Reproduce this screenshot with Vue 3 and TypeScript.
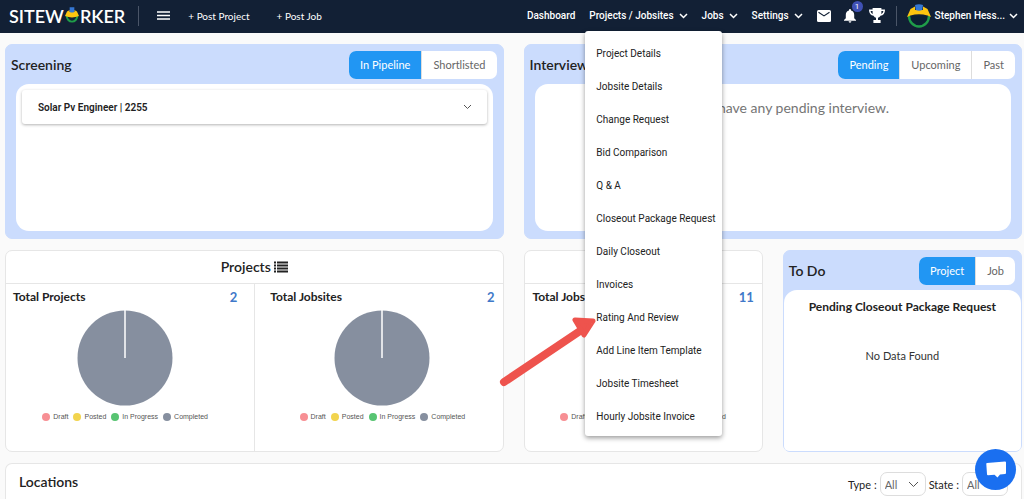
<script setup lang="ts">
import { ref } from 'vue'

interface ChartPanel {
  title: string
  total: number
}

interface Status {
  label: string
  tone: string
}

const menuItems: string[] = [
  'Project Details',
  'Jobsite Details',
  'Change Request',
  'Bid Comparison',
  'Q & A',
  'Closeout Package Request',
  'Daily Closeout',
  'Invoices',
  'Rating And Review',
  'Add Line Item Template',
  'Jobsite Timesheet',
  'Hourly Jobsite Invoice',
]

const highlighted = 'Rating And Review'

const projectCharts: ChartPanel[] = [
  { title: 'Total Projects', total: 2 },
  { title: 'Total Jobsites', total: 2 },
]
const jobCharts: ChartPanel[] = [{ title: 'Total Jobs', total: 11 }]

const statuses: Status[] = [
  { label: 'Draft', tone: 'draft' },
  { label: 'Posted', tone: 'posted' },
  { label: 'In Progress', tone: 'progress' },
  { label: 'Completed', tone: 'completed' },
]

const groups = [
  { name: 'Projects', charts: projectCharts },
  { name: 'Jobs', charts: jobCharts },
]

const screeningTab = ref('In Pipeline')
const interviewTab = ref('Pending')
const todoTab = ref('Project')
</script>

<template>
  <div class="page">
    <header class="topbar">
      <a class="logo" href="#" aria-label="Siteworker">
        <span>SITEW</span>
        <svg class="logo-mark" viewBox="0 0 24 28" aria-hidden="true">
          <path d="M3 15a9 9.500 0 0 0 18 0" fill="none" stroke="#1f9d49" stroke-width="3.4" />
          <path d="M0 15 3.500 7 8 4.500V8h8V4.500L20.500 7 24 15Q12 20 0 15Z" fill="#fdc50f" />
          <path d="M8 0h8v7q-1 2-4 2T8 7Z" fill="#3577d4" />
        </svg>
        <span>RKER</span>
      </a>
      <span class="rule"></span>
      <button class="burger" type="button" aria-label="Menu">
        <svg viewBox="0 0 13 9" aria-hidden="true">
          <path d="M0 1h13M0 4.500h13M0 8h13" stroke="#fff" stroke-width="1.500" />
        </svg>
      </button>
      <a class="post" href="#">+ Post Project</a>
      <a class="post" href="#">+ Post Job</a>

      <nav class="nav">
        <a class="nav-link" href="#">Dashboard</a>
        <div class="nav-item">
          <button class="nav-link" type="button" aria-expanded="true">
            Projects / Jobsites
            <svg class="chev" viewBox="0 0 9 6" aria-hidden="true"><path d="m1 1 3.500 3.500L8 1" /></svg>
          </button>
          <ul class="menu">
            <li v-for="item in menuItems" :key="item">
              <a href="#">{{ item }}</a>
              <svg v-if="item === highlighted" class="arrow" viewBox="0 0 100 72" aria-hidden="true">
                <path d="M6 66 82 15" stroke="#ee534d" stroke-width="8" stroke-linecap="round" />
                <path d="M77 4 95 5 86 19Z" fill="#ee534d" stroke="#ee534d" stroke-width="5" stroke-linejoin="round" />
              </svg>
            </li>
          </ul>
        </div>
        <button class="nav-link" type="button">
          Jobs
          <svg class="chev" viewBox="0 0 9 6" aria-hidden="true"><path d="m1 1 3.500 3.500L8 1" /></svg>
        </button>
        <button class="nav-link" type="button">
          Settings
          <svg class="chev" viewBox="0 0 9 6" aria-hidden="true"><path d="m1 1 3.500 3.500L8 1" /></svg>
        </button>
      </nav>

      <div class="tools">
        <button type="button" aria-label="Messages">
          <svg width="14" height="12" viewBox="0 0 14 12" aria-hidden="true">
            <rect width="14" height="12" rx="1.500" fill="#fff" />
            <path d="m1.500 2.300 5.500 3.600 5.500-3.600" fill="none" stroke="#122035" stroke-width="1.200" />
          </svg>
        </button>
        <button class="bell" type="button" aria-label="Notifications">
          <svg width="12" height="14" viewBox="0 0 12 14" aria-hidden="true">
            <path d="M6 0a1 1 0 0 1 1 1v.6c2 .5 3.200 2.200 3.200 4.200v3.400L12 11v.7H0V11l1.800-1.800V5.800c0-2 1.200-3.700 3.200-4.200V1a1 1 0 0 1 1-1ZM4.600 12.300h2.800a1.400 1.400 0 0 1-2.800 0Z" fill="#fff" />
          </svg>
          <span class="badge">1</span>
        </button>
        <button type="button" aria-label="Awards">
          <svg width="16" height="15" viewBox="0 0 16 15" aria-hidden="true">
            <path d="M3.600 0h8.800v4.500c0 3-1.700 4.800-3.400 5.300V12h2.600v3H4.400v-3H7V9.800c-1.700-.5-3.400-2.300-3.400-5.300Z" fill="#fff" />
            <path d="M4 2.200H.8C.8 5 2.200 6.600 4.800 7M12 2.200h3.200C15.200 5 13.800 6.600 11.200 7" fill="none" stroke="#fff" stroke-width="1.500" />
          </svg>
        </button>
      </div>
      <span class="rule"></span>
      <button class="user" type="button">
        <svg class="avatar" viewBox="0 0 24 26" aria-hidden="true">
          <path d="M2 13a10 10.500 0 0 0 20 0" fill="#0c2032" stroke="#1f9d49" stroke-width="2.400" />
          <path d="M0 14 3.500 6 8 3.500V7h8V3.500L20.500 6 24 14l-3.500-1.500Q12 10 3.500 12.500Z" fill="#fdc50f" />
          <path d="M8 2q4-1.500 8 0l-.8 5q-3.200 1.600-6.400 0Z" fill="#3577d4" />
        </svg>
        <span>Stephen Hess...</span>
        <svg class="chev" viewBox="0 0 9 6" aria-hidden="true"><path d="m1 1 3.500 3.500L8 1" /></svg>
      </button>
    </header>

    <main class="content">
      <section class="card blue wide">
        <div class="card-head">
          <h2>Screening</h2>
          <div class="tabs">
            <button
              v-for="tab in ['In Pipeline', 'Shortlisted']"
              :key="tab"
              type="button"
              :class="{ active: tab === screeningTab }"
              @click="screeningTab = tab"
            >{{ tab }}</button>
          </div>
        </div>
        <div class="well">
          <button class="accordion" type="button">
            <span>Solar Pv Engineer | 2255</span>
            <svg class="chev" viewBox="0 0 9 6" aria-hidden="true"><path d="m1 1 3.500 3.500L8 1" /></svg>
          </button>
        </div>
      </section>

      <section class="card blue wide">
        <div class="card-head">
          <h2>Interviews</h2>
          <div class="tabs">
            <button
              v-for="tab in ['Pending', 'Upcoming', 'Past']"
              :key="tab"
              type="button"
              :class="{ active: tab === interviewTab }"
              @click="interviewTab = tab"
            >{{ tab }}</button>
          </div>
        </div>
        <div class="well">
          <p class="notice">You don't have any pending interview.</p>
        </div>
      </section>

      <section v-for="group in groups" :key="group.name" class="card charts" :class="{ wide: group.charts.length > 1 }">
        <h2 class="charts-title">
          {{ group.name }}
          <svg width="14" height="12" viewBox="0 0 14 12" aria-hidden="true">
            <path d="M0 1.500h2M0 4.500h2M0 7.500h2M0 10.500h2M3 1.500h11M3 4.500h11M3 7.500h11M3 10.500h11" stroke="#222" stroke-width="2" />
          </svg>
        </h2>
        <div class="panels">
          <div v-for="chart in group.charts" :key="chart.title" class="panel">
            <div class="panel-head">
              <h3>{{ chart.title }}</h3>
              <strong>{{ chart.total }}</strong>
            </div>
            <svg class="pie" viewBox="0 0 96 96" aria-hidden="true">
              <circle cx="48" cy="48" r="47.500" fill="#868f9f" />
              <path d="M48 0v48" stroke="#fff" stroke-width="1.500" />
            </svg>
            <ul class="legend">
              <li v-for="status in statuses" :key="status.label">
                <i :class="status.tone"></i>{{ status.label }}
              </li>
            </ul>
          </div>
        </div>
      </section>

      <section class="card blue todo">
        <div class="card-head">
          <h2>To Do</h2>
          <div class="tabs">
            <button
              v-for="tab in ['Project', 'Job']"
              :key="tab"
              type="button"
              :class="{ active: tab === todoTab }"
              @click="todoTab = tab"
            >{{ tab }}</button>
          </div>
        </div>
        <div class="todo-body">
          <h3>Pending Closeout Package Request</h3>
          <p>No Data Found</p>
        </div>
      </section>
    </main>

    <section class="card locations">
      <h2>Locations</h2>
      <div class="filters">
        <label for="type">Type :</label>
        <span class="select">
          <select id="type"><option>All</option></select>
          <svg viewBox="0 0 11 7" aria-hidden="true"><path d="m1 1 4.500 4.500L10 1" /></svg>
        </span>
        <label for="state">State :</label>
        <span class="select">
          <select id="state"><option>All</option></select>
          <svg viewBox="0 0 11 7" aria-hidden="true"><path d="m1 1 4.500 4.500L10 1" /></svg>
        </span>
      </div>
    </section>

    <button class="chat" type="button" aria-label="Chat">
      <svg width="20" height="17" viewBox="0 0 20 17" aria-hidden="true">
        <path d="M1 2 19 .5Q20 .5 20 1.500V12q0 1-1 1l-5 .4-2.500 3-3-2.600L2 14.300q-1 0-1-1L.3 3Q.2 2.100 1 2Z" fill="#fff" />
      </svg>
    </button>
  </div>
</template>

<style>
body {
  margin: 0;
}
</style>

<style scoped>
.page {
  display: flex;
  flex-direction: column;
  height: 100vh;
  overflow: hidden;
  position: relative;
  background: #fafafa;
  color: #222;
  font-family: Lato, "Liberation Sans", sans-serif;
  font-size: 11px;
}
.page * {
  box-sizing: border-box;
}
button {
  border: 0;
  padding: 0;
  background: none;
  color: inherit;
  font: inherit;
  cursor: pointer;
}
a {
  color: inherit;
  text-decoration: none;
}
h2,
h3,
p,
ul {
  margin: 0;
  padding: 0;
}
ul {
  list-style: none;
}
svg {
  display: block;
  flex: none;
}
h2 {
  font-size: 14px;
  line-height: 20px;
  font-weight: 600;
}
h3 {
  font-size: 12px;
  line-height: 18px;
  font-weight: 700;
}

.topbar {
  display: flex;
  align-items: center;
  flex: none;
  height: 33px;
  padding: 0 6px 2px 9px;
  background: #122035;
  color: #fff;
}
.logo {
  display: flex;
  align-items: center;
  gap: 1px;
  margin-right: 13px;
  font-size: 18px;
  line-height: 30px;
  font-weight: 600;
}
.logo-mark {
  width: 14px;
  height: 17px;
}
.rule {
  width: 1px;
  height: 20px;
  background: #4a5568;
}
.burger {
  margin: 0 18px;
}
.burger svg {
  width: 13px;
  height: 9px;
}
.post {
  margin-right: 27px;
  font-size: 10px;
}
.nav {
  display: flex;
  gap: 14px;
  margin-left: auto;
  font-family: Roboto, sans-serif;
  font-size: 10px;
  font-weight: 500;
}
.nav-item {
  position: relative;
}
.nav-link {
  display: flex;
  align-items: center;
  gap: 5px;
  height: 30px;
}
.chev {
  width: 9px;
  height: 6px;
  fill: none;
  stroke: currentColor;
  stroke-width: 1.500;
}
.tools {
  display: flex;
  align-items: center;
  gap: 13px;
  margin: 0 11px 0 14px;
}
.bell {
  position: relative;
}
.badge {
  position: absolute;
  top: -8px;
  left: 8px;
  width: 11px;
  border-radius: 50%;
  background: #3f51b5;
  font-family: Roboto, sans-serif;
  font-size: 8px;
  line-height: 11px;
  text-align: center;
}
.user {
  display: flex;
  align-items: center;
  gap: 4px;
  margin-left: 10px;
  font-family: Roboto, sans-serif;
  font-size: 10px;
  font-weight: 500;
}
.avatar {
  width: 24px;
  height: 26px;
}

.menu {
  position: absolute;
  z-index: 5;
  top: 30px;
  left: -4px;
  padding: 6px 0 3px;
  border-radius: 3px;
  background: #fff;
  box-shadow: 0 2px 5px rgba(0, 0, 0, 0.4);
  color: #222;
  font-weight: 400;
}
.menu li {
  position: relative;
}
.menu a {
  display: block;
  padding: 0 6px 0 11px;
  line-height: 33px;
  white-space: nowrap;
}
.arrow {
  position: absolute;
  top: 15px;
  left: -87px;
  width: 100px;
  height: 72px;
}

.content {
  display: grid;
  grid-template-columns: repeat(4, 1fr);
  gap: 11px 20px;
  flex: none;
  padding: 11px 2px 11px 5px;
}
.card {
  border: 1px solid #e6e6e6;
  border-radius: 7px;
  background: #fff;
}
.wide {
  grid-column: span 2;
}
.blue {
  border-color: #cbdcfd;
  background: #cbdcfd;
}
.card-head {
  display: flex;
  align-items: center;
  justify-content: space-between;
  height: 39px;
  padding: 0 6px 0 5px;
}
.blue.wide {
  padding-bottom: 7px;
}
.tabs {
  display: flex;
  border-radius: 7px;
  overflow: hidden;
  background: #fff;
  color: #666;
}
.tabs button {
  padding: 0 11px;
  line-height: 28px;
}
.tabs button + button {
  border-left: 1px solid #ddd;
}
.tabs .active {
  background: #2196f3;
  color: #fff;
}
.well {
  min-height: 147px;
  margin: 0 10px;
  padding: 6px;
  border-radius: 13px;
  background: #fff;
}
.accordion {
  display: flex;
  align-items: center;
  justify-content: space-between;
  width: 100%;
  height: 34px;
  padding: 0 15px 0 16px;
  border-radius: 3px;
  box-shadow: 0 1px 3px rgba(0, 0, 0, 0.3);
  font-family: Roboto, sans-serif;
  font-size: 10px;
  font-weight: 600;
}
.accordion .chev {
  stroke: #555;
  stroke-width: 1;
}
.notice {
  padding-top: 8px;
  color: #757575;
  font-size: 14px;
  line-height: 20px;
  text-align: center;
}

.charts-title {
  display: flex;
  align-items: center;
  justify-content: center;
  gap: 3px;
  height: 33px;
  border-bottom: 1px solid #e6e6e6;
}
.panels {
  display: grid;
  grid-auto-columns: 1fr;
  grid-auto-flow: column;
}
.panel {
  height: 167px;
  padding: 4px 8px 0;
}
.wide .panel {
  padding-right: 17px;
  padding-left: 7px;
}
.wide .panel + .panel {
  padding-right: 8px;
  padding-left: 15px;
  border-left: 1px solid #e6e6e6;
}
.panel-head {
  display: flex;
  justify-content: space-between;
}
.panel-head strong {
  color: #3f79c9;
  font-size: 13px;
  line-height: 18px;
}
.pie {
  width: 96px;
  height: 96px;
  margin: 4px auto 6px;
}
.legend {
  display: flex;
  justify-content: center;
  gap: 5px;
  color: #555;
  font-family: "Liberation Sans", Arial, sans-serif;
  font-size: 7px;
  line-height: 9px;
}
.legend li {
  display: flex;
  align-items: center;
  gap: 3px;
  white-space: nowrap;
}
.legend i {
  width: 8px;
  height: 8px;
  border-radius: 50%;
}
.draft {
  background: #f78f94;
}
.posted {
  background: #f2d44e;
}
.progress {
  background: #58c472;
}
.completed {
  background: #868f9f;
}

.todo {
  display: flex;
  flex-direction: column;
}
.todo-body {
  flex: 1;
  padding-top: 8px;
  border-radius: 13px 13px 5px 5px;
  background: #fff;
  text-align: center;
}
.todo-body p {
  padding-top: 31px;
  color: #333;
  line-height: 18px;
}

.locations {
  display: flex;
  align-items: flex-start;
  justify-content: space-between;
  flex: 1;
  margin: 0 2px 0 5px;
  padding: 8px 13px 0;
  border-bottom: 0;
  border-radius: 7px 7px 0 0;
}
.filters {
  display: flex;
  align-items: center;
  gap: 3px;
}
.select {
  position: relative;
}
.select select {
  display: block;
  width: 46px;
  height: 24px;
  padding: 0 4px;
  border: 1px solid #ddd;
  border-radius: 7px;
  appearance: none;
  background: #fff;
  color: #666;
  font: inherit;
}
.select svg {
  position: absolute;
  top: 9px;
  right: 7px;
  width: 11px;
  height: 7px;
  fill: none;
  stroke: #555;
  pointer-events: none;
}
.chat {
  position: absolute;
  right: 8px;
  bottom: 9px;
  display: grid;
  place-items: center;
  width: 41px;
  height: 41px;
  border-radius: 50%;
  background: #1a6ff0;
}
</style>
